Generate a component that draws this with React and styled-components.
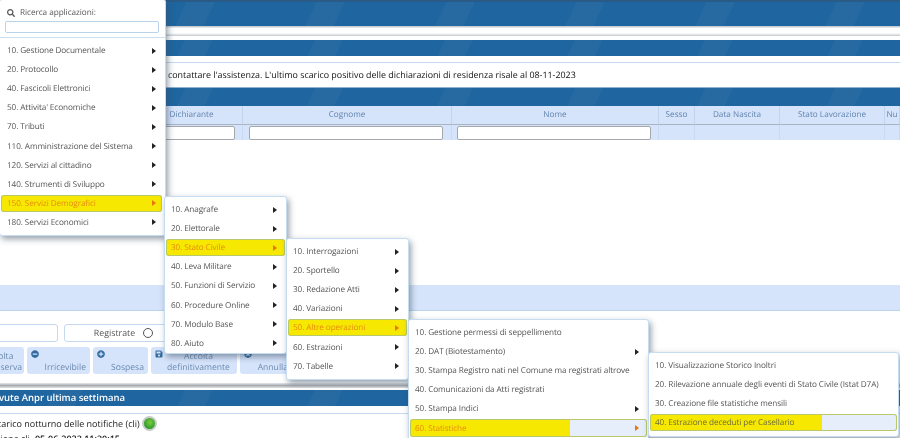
import React from 'react'
import styled, { createGlobalStyle } from 'styled-components'
import { FaMinusCircle, FaPlusCircle, FaSave, FaTimesCircle, FaSearch } from 'react-icons/fa'

const Global = createGlobalStyle`
  html, body {
    margin: 0;
    padding: 0;
    background: #fff;
    overflow: hidden;
    font-family: "Open Sans", "Liberation Sans", sans-serif;
    text-rendering: geometricPrecision;
  }
`

const Page = styled.div`
  position: relative;
  width: 900px;
  height: 438px;
  overflow: hidden;
  background: #fff;
  filter: blur(0.3px);
`

const Band = styled.div`
  height: ${p => p.h}px;
  margin-top: ${p => p.mt || 0}px;
  background:
    linear-gradient(115deg, transparent 40%, rgba(255,255,255,.035) 40%, rgba(255,255,255,.035) 60%, transparent 60%) 0 0 / 130px 100%,
    #1f659f;
  border-top: ${p => (p.dark ? '2px solid #2a5a86' : 'none')};
  box-sizing: border-box;
  color: #fff;
  font-size: 9.5px;
  font-weight: 600;
  line-height: 16px;
  white-space: nowrap;
`

const GreyBar = styled.div`
  height: 10px;
  background: linear-gradient(#b8bfc6, #ffffff 25%, #ffffff 70%, #c5c9cd);
`

const Message = styled.div`
  margin-top: 6px;
  height: 26px;
  box-sizing: border-box;
  border-top: 1px solid #c4d9ef;
  border-bottom: 1px solid #8db0cf;
  padding-left: 168px;
  font-size: 8.9px;
  line-height: 23px;
  color: #111;
  white-space: nowrap;
`

const TableGrid = styled.div`
  display: grid;
  grid-template-columns: 141px 102px 209px 207px 36px 85px 105px 15px;
  background: #d6e4fb;
  height: 34px;
  overflow: hidden;
`

const HeadCell = styled.div`
  height: 18px;
  border-right: 1px solid #c2d4ec;
  border-bottom: 1px solid #aab4c0;
  font-size: 8.2px;
  line-height: 18px;
  text-align: center;
  color: #5f83ae;
  white-space: nowrap;
`

const FilterCell = styled.div`
  height: 16px;
  border-right: 1px solid #c9d9f1;
  padding: 1px 0 0 ${p => p.pad}px;
  box-sizing: border-box;
`

const FilterInput = styled.div`
  height: 14px;
  width: ${p => p.w}px;
  box-sizing: border-box;
  background: #fff;
  border: 1px solid #a4a8ad;
  border-radius: 2px;
`

const Body = styled.div`
  height: 145px;
`

const Strip = styled.div`
  height: 25px;
  background: #d6e4fb;
  border-bottom: 1px solid #bcd3ee;
`

const RadioRow = styled.div`
  display: flex;
  gap: 6px;
  margin: 13px 0 0 -30px;
`

const RadioBox = styled.div`
  width: ${p => p.w}px;
  height: 18px;
  box-sizing: border-box;
  border: 1px solid #c4d9ef;
  border-radius: 3px;
  display: flex;
  align-items: center;
  justify-content: center;
  gap: 8px;
  font-size: 8.8px;
  color: #555;
`

const RadioDot = styled.span`
  width: 8px;
  height: 8px;
  border: 1px solid #555;
  border-radius: 50%;
`

const ActionRow = styled.div`
  display: flex;
  gap: 3px;
  margin: 5px 0 0 -26px;
`

const ActionButton = styled.div`
  position: relative;
  width: ${p => p.w}px;
  height: 27px;
  box-sizing: border-box;
  flex: none;
  background: #d6e4fb;
  border-radius: 3px;
  padding: 4px 4px 0 ${p => p.pl || 0}px;
  text-align: ${p => p.align || 'right'};
  font-size: 8.6px;
  line-height: 11px;
  color: #6b8ab0;
  white-space: nowrap;

  svg {
    position: absolute;
    left: 4px;
    top: 3px;
    width: 8px;
    height: 8px;
    color: #336c9f;
  }
`

const ActionLabel = styled.div`
  padding-top: ${p => p.pt || 0}px;
`

const Separator = styled.div`
  margin-top: 9px;
  height: 5px;
  background: linear-gradient(#e6e8ea, #a9adb1 50%, #e2e4e6);
`

const BottomText = styled.div`
  margin: ${p => p.mt}px 0 0 ${p => p.ml}px;
  display: flex;
  align-items: center;
  gap: 2px;
  height: ${p => p.h || 15}px;
  font-size: 9px;
  color: #222;
  white-space: nowrap;
  b { font-weight: 600; margin-left: 3px; }
`

const BandTitle = styled.div`
  margin-left: ${p => p.ml}px;
`

const GreenDot = styled.span`
  width: 11px;
  height: 11px;
  flex: none;
  border-radius: 50%;
  background: radial-gradient(circle at 55% 40%, #7ccb3f, #2f9d2c 70%);
  border: 2px solid #c8ccc8;
`

const BottomRule = styled.div`
  margin-top: 7px;
  border-top: 1px solid #c4d9ef;
`

const Menu = styled.div`
  position: absolute;
  left: ${p => p.x}px;
  top: ${p => p.y}px;
  width: ${p => p.w}px;
  height: ${p => p.h}px;
  box-sizing: border-box;
  padding-top: ${p => p.pt || 3}px;
  background: #fff;
  border: 1px solid #c6dcf0;
  border-radius: 3px;
  box-shadow: 2px 3px 6px rgba(60, 80, 100, .55);
  overflow: hidden;
`

const SearchBlock = styled.div`
  height: 37px;
  margin-bottom: 3px;
  padding: 5px 5px 0;
  box-sizing: border-box;
  border-bottom: 1px solid #c9def1;
`

const SearchLabel = styled.div`
  display: flex;
  align-items: center;
  gap: 5px;
  padding-left: 2px;
  font-size: 8.2px;
  letter-spacing: -0.05px;
  line-height: 13px;
  color: #555;
  svg { width: 8px; height: 8px; color: #555; }
`

const SearchInput = styled.div`
  height: 12px;
  margin-top: 2px;
  width: 154px;
  box-sizing: border-box;
  border: 1px solid #b9d3ea;
  border-radius: 2px;
`

const Row = styled.div`
  position: relative;
  isolation: isolate;
  height: 19.1px;
  margin: 0 1px;
  padding-left: ${p => p.pad}px;
  display: flex;
  align-items: center;
  justify-content: space-between;
  box-sizing: border-box;
  font-size: 8.2px;
  letter-spacing: -0.1px;
  white-space: nowrap;
  color: ${p => (p.tone === 'plain' ? '#6d6d3a' : p.tone ? '#e88b10' : '#555')};

  &::before {
    content: '';
    display: ${p => (p.tone ? 'block' : 'none')};
    position: absolute;
    z-index: -1;
    top: 1px;
    bottom: 1px;
    left: 0;
    right: ${p => p.inset}px;
    border-radius: 3px;
    background: linear-gradient(90deg, #f6e800 ${p => p.mark}, #e6eefc ${p => p.mark});
    box-shadow: inset 0 0 0 1px #b9c96a;
  }
`

const Arrow = styled.span`
  width: 0;
  height: 0;
  margin-right: 8px;
  border-left: 4px solid ${p => (p.active ? '#e8760c' : '#222')};
  border-top: 3px solid transparent;
  border-bottom: 3px solid transparent;
`

const MenuBlock = ({ items, activeIndex, arrows = true, mark = '100%', plainActive, search, pad = 5, inset = 0, ...rest }) => (
  <Menu {...rest}>
    {search && (
      <SearchBlock>
        <SearchLabel><FaSearch />Ricerca applicazioni:</SearchLabel>
        <SearchInput />
      </SearchBlock>
    )}
    {items.map((label, i) => {
      const active = i === activeIndex
      return (
        <Row key={label} pad={pad} inset={inset} mark={mark} tone={active ? (plainActive ? 'plain' : 'orange') : undefined}>
          {label}
          {(arrows === true || (arrows && arrows.includes(i))) && <Arrow active={active} />}
        </Row>
      )
    })}
  </Menu>
)

const columns = [
  { label: '', pad: 6 },
  { label: 'Dichiarante', input: 88, pad: 6 },
  { label: 'Cognome', input: 194, pad: 6 },
  { label: 'Nome', input: 194, pad: 5 },
  { label: 'Sesso', pad: 6 },
  { label: 'Data Nascita', pad: 6 },
  { label: 'Stato Lavorazione', pad: 6 },
  { label: 'Nu', pad: 6 },
]

const App = () => (
  <Page>
    <Global />
    <Band h={26} dark />
    <GreyBar />
    <Band h={16} mt={4} />
    <Message>contattare l'assistenza. L'ultimo scarico positivo delle dichiarazioni di residenza risale al 08-11-2023</Message>
    <Band h={18} />
    <TableGrid>
      {columns.map(c => <HeadCell key={c.label}>{c.label}</HeadCell>)}
      {columns.map(c => (
        <FilterCell key={c.label} pad={c.pad}>{c.input ? <FilterInput w={c.input} /> : null}</FilterCell>
      ))}
    </TableGrid>
    <Body />
    <Strip />
    <RadioRow>
      <RadioBox w={88} />
      <RadioBox w={119}>Registrate <RadioDot /></RadioBox>
    </RadioRow>
    <ActionRow>
      <ActionButton w={50} align="center" pl={4}>
        <ActionLabel>Accolta</ActionLabel>
        <ActionLabel>con riserva</ActionLabel>
      </ActionButton>
      <ActionButton w={63}><FaMinusCircle /><ActionLabel pt={11}>Irricevibile</ActionLabel></ActionButton>
      <ActionButton w={55}><FaPlusCircle /><ActionLabel pt={11}>Sospesa</ActionLabel></ActionButton>
      <ActionButton w={86} align="center" pl={13}>
        <FaSave />
        <ActionLabel>Accolta</ActionLabel>
        <ActionLabel>definitivamente</ActionLabel>
      </ActionButton>
      <ActionButton w={52}><FaTimesCircle /><ActionLabel pt={11}>Annulla</ActionLabel></ActionButton>
    </ActionRow>
    <Separator />
    <Band h={16} mt={2}><BandTitle ml={-20}>Ricevute Anpr ultima settimana</BandTitle></Band>
    <BottomRule />
    <BottomText mt={1} ml={-8} h={16}>Scarico notturno delle notifiche (cli)<GreenDot /></BottomText>
    <BottomText mt={0} ml={-58}>Ultima esecuzione cli <b>05-06-2023 11:30:15</b></BottomText>

    <MenuBlock
      x={-1} y={-1} w={167} h={237} search pt={1} pad={6} inset={2} activeIndex={8}
      items={['10. Gestione Documentale', '20. Protocollo', '40. Fascicoli Elettronici', "50. Attivita' Economiche", '70. Tributi', '110. Amministrazione del Sistema', '120. Servizi al cittadino', '140. Strumenti di Sviluppo', '150. Servizi Demografici', '180. Servizi Economici']}
    />
    <MenuBlock
      x={164} y={196} w={123} h={158} activeIndex={2}
      items={['10. Anagrafe', '20. Elettorale', '30. Stato Civile', '40. Leva Militare', '50. Funzioni di Servizio', '60. Procedure Online', '70. Modulo Base', '80. Aiuto']}
    />
    <MenuBlock
      x={286} y={238} w={123} h={142} activeIndex={4}
      items={['10. Interrogazioni', '20. Sportello', '30. Redazione Atti', '40. Variazioni', '50. Altre operazioni', '60. Estrazioni', '70. Tabelle']}
    />
    <MenuBlock
      x={408} y={319} w={241} h={125} activeIndex={5} mark="160px" arrows={[1, 4, 5]}
      items={['10. Gestione permessi di seppellimento', '20. DAT (Biotestamento)', '30. Stampa Registro nati nel Comune ma registrati altrove', '40. Comunicazioni da Atti registrati', '50. Stampa Indici', '60. Statistiche']}
    />
    <MenuBlock
      x={648} y={352} w={251} h={85} activeIndex={3} mark="172px" arrows={false} plainActive
      items={['10. Visualizzazione Storico Inoltri', '20. Rilevazione annuale degli eventi di Stato Civile (Istat D7A)', '30. Creazione file statistiche mensili', '40. Estrazione deceduti per Casellario']}
    />
  </Page>
)

export default App
